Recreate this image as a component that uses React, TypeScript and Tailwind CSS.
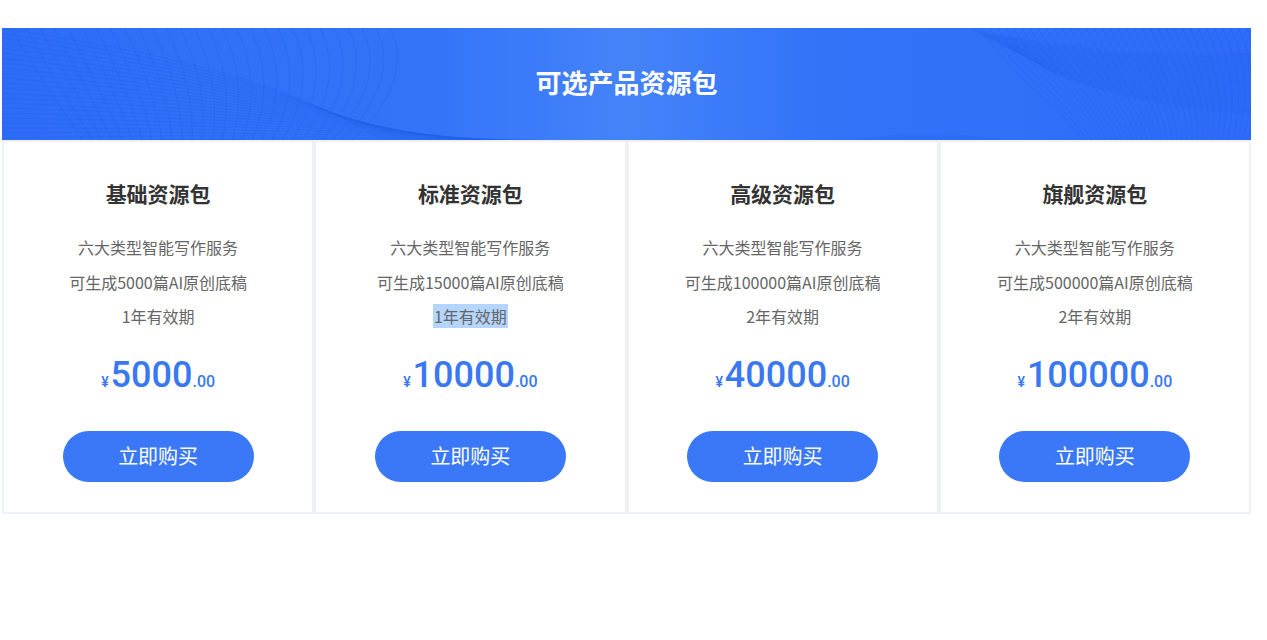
const packs = [
  { name: "基础资源包", count: "5000", years: "1", price: "5000" },
  { name: "标准资源包", count: "15000", years: "1", price: "10000", selected: true },
  { name: "高级资源包", count: "100000", years: "2", price: "40000" },
  { name: "旗舰资源包", count: "500000", years: "2", price: "100000" },
];

const cjk = "font-['Noto_Sans_CJK_SC','Noto_Sans',sans-serif]";

function Mesh() {
  // faint wave-mesh lines drawn over the banner
  const left = Array.from({ length: 28 }, (_, i) => i);
  const right = Array.from({ length: 34 }, (_, i) => i);
  return (
    <svg
      className="absolute inset-0 h-full w-full"
      viewBox="0 0 1249 112"
      preserveAspectRatio="none"
      fill="none"
    >
      {left.map((i) => (
        <path
          key={"a" + i}
          d={`M${10 + i * 14} 0 C ${30 + i * 14} 40, ${60 + i * 12} 80, ${80 + i * 10} 112`}
          stroke="#1f5ee8"
          strokeOpacity="0.35"
          strokeWidth="1"
        />
      ))}
      {left.map((i) => (
        <path
          key={"b" + i}
          d={`M0 ${i * 5} C 120 ${20 + i * 4}, 260 ${40 + i * 3}, ${380 + i * 6} 112`}
          stroke="#1f5ee8"
          strokeOpacity="0.3"
          strokeWidth="1"
        />
      ))}
      {right.map((i) => (
        <path
          key={"c" + i}
          d={`M${980 + i * 8} 0 C ${1000 + i * 8} 40, ${1060 + i * 6} 80, ${1080 + i * 5} 112`}
          stroke="#1f5ee8"
          strokeOpacity="0.3"
          strokeWidth="1"
        />
      ))}
      {right.map((i) => (
        <path
          key={"d" + i}
          d={`M${970 + i * 2} ${2 + i} C 1060 ${20 + i}, 1140 ${30 + i * 1.5}, 1249 ${26 + i * 1.8}`}
          stroke="#1f5ee8"
          strokeOpacity="0.25"
          strokeWidth="1"
        />
      ))}
      <path d="M850 112 C 900 104, 960 104, 1000 112 Z" fill="#2a68f2" fillOpacity="0.5" />
    </svg>
  );
}

export default function App() {
  return (
    <div className="min-h-[640px] bg-white pt-[28px] pl-[2px]">
      <div className="w-[1249px]">
        <div className="relative flex h-[112px] items-center justify-center overflow-hidden bg-[linear-gradient(90deg,#2e6cf7_0%,#3474f8_35%,#4583f9_50%,#3373f8_65%,#2d6bf8_100%)] pb-[6px]">
          <Mesh />
          <h1 className={`relative text-[26px] font-bold text-white ${cjk}`}>
            可选产品资源包
          </h1>
        </div>

        <div className="grid grid-cols-4">
          {packs.map((p) => (
            <div
              key={p.name}
              className={`flex h-[374px] flex-col items-center border-2 border-[#eef1f9] pt-[36px] ${cjk}`}
            >
              <h2 className="text-[21px] leading-[30px] font-bold text-[#333]">{p.name}</h2>
              <div className="mt-[22px] flex flex-col items-center text-[16px] leading-[34.5px] text-[#666]">
                <p>六大类型智能写作服务</p>
                <p>可生成{p.count}篇AI原创底稿</p>
                <p>
                  <span className={p.selected ? "bg-[#b4d5fe] px-px" : ""}>
                    {p.years}年有效期
                  </span>
                </p>
              </div>
              <div className="mt-[19px] flex items-baseline text-[#3a78f2] font-['Roboto','Noto_Sans',sans-serif]">
                <span className="mr-[2px] text-[14px] font-medium">¥</span>
                <span className="text-[36px] leading-[44px] font-medium">
                  {p.price}
                </span>
                <span className="text-[16px] font-medium">.00</span>
              </div>
              <button
                className={`mt-[34px] h-[51px] w-[191px] rounded-full bg-[#3a78f8] text-[20px] text-white ${cjk}`}
              >
                立即购买
              </button>
            </div>
          ))}
        </div>
      </div>
    </div>
  );
}
